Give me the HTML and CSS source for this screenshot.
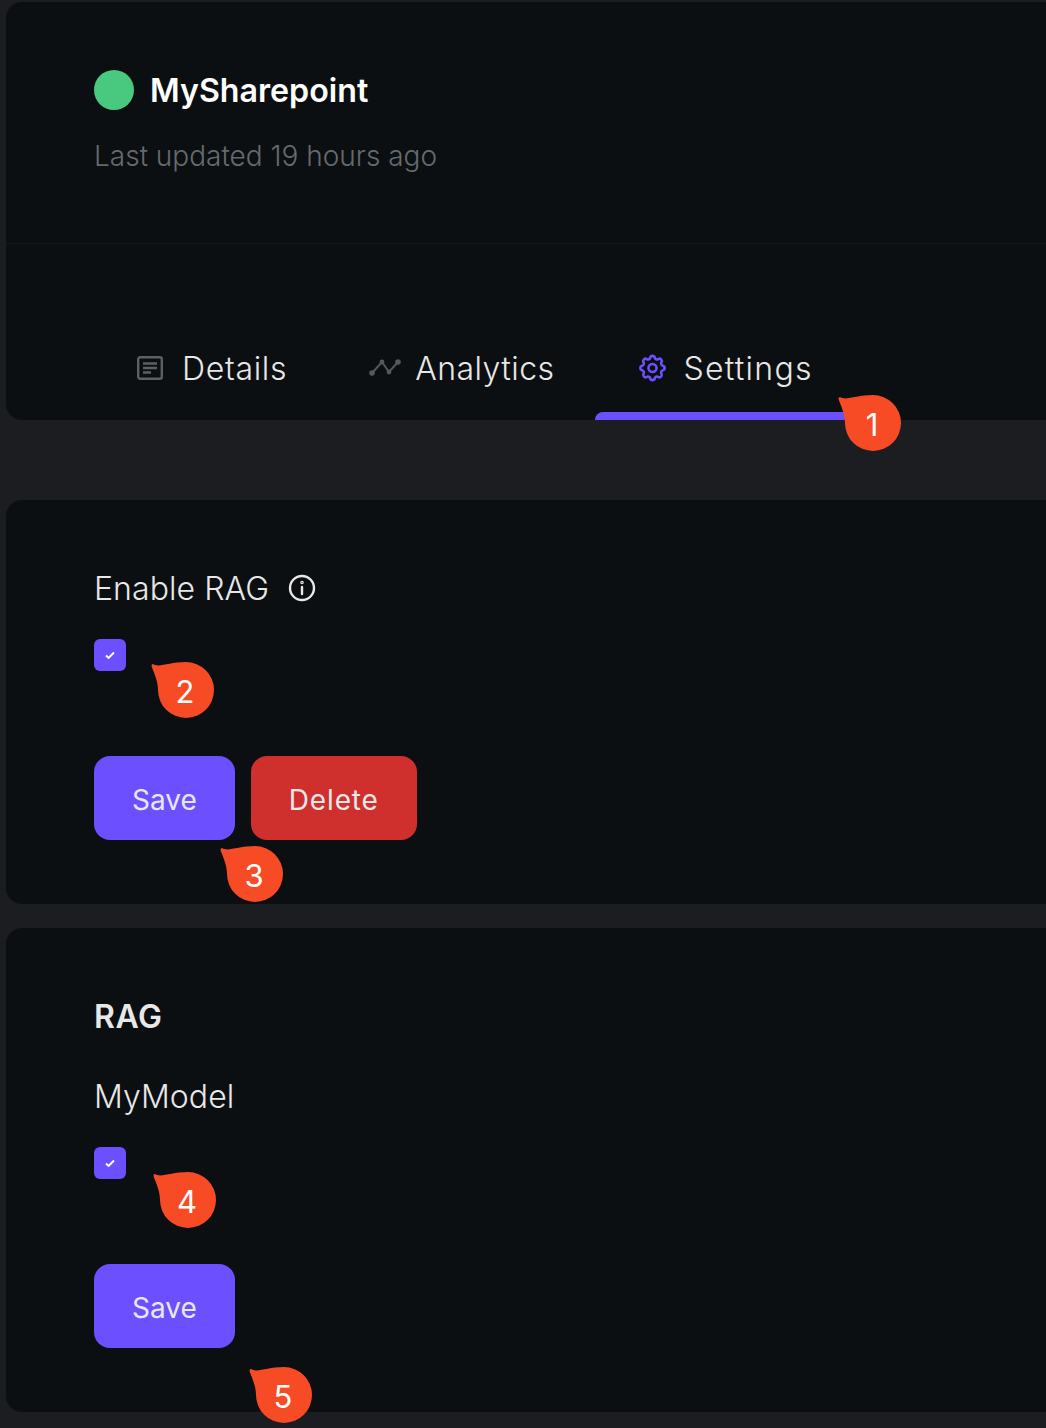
FILE: index.html
```html
<!DOCTYPE html>
<html lang="en">
<head>
    <meta charset="UTF-8">
    <meta name="viewport" content="width=device-width, initial-scale=1.0">
    <title>MySharepoint settings</title>
    <link rel="stylesheet" href="styles.css">
</head>
<body>
    <div class="page">
        <section class="card top-card">
            <header class="kb-header">
                <div class="kb-title">
                    <span class="status-dot"></span>
                    <h1>MySharepoint</h1>
                </div>
                <p class="updated">Last updated 19 hours ago</p>
            </header>
            <nav class="tabs">
                <a class="tab tab-details">
                    <svg class="tab-icon" viewBox="0 0 26 24" fill="none" stroke="#5c5f63" stroke-width="2.4">
                        <rect x="1.2" y="1.2" width="23.6" height="21.6" rx="2"/>
                        <path d="M6 7.5h14M6 12h14M6 16.5h8"/>
                    </svg>
                    Details
                </a>
                <a class="tab tab-analytics">
                    <svg class="tab-icon" viewBox="0 0 32 22" fill="none" stroke="#55585c" stroke-width="2">
                        <path d="M3 16l10-11 7 10 9-10"/>
                        <circle cx="3" cy="16" r="1.8" fill="#55585c"/>
                        <circle cx="13" cy="5" r="1.4" fill="#55585c"/>
                        <circle cx="20" cy="15" r="1.4" fill="#55585c"/>
                        <circle cx="29" cy="5" r="1.8" fill="#55585c"/>
                    </svg>
                    Analytics
                </a>
                <a class="tab tab-settings active">
                    <svg class="tab-icon" viewBox="2 2 20 20" fill="none" stroke="#6c50ff" stroke-width="1.9" stroke-linejoin="round">
                        <path d="M10.325 4.317c.426-1.756 2.924-1.756 3.35 0a1.724 1.724 0 0 0 2.573 1.066c1.543-.94 3.31.826 2.37 2.37a1.724 1.724 0 0 0 1.065 2.572c1.756.426 1.756 2.924 0 3.35a1.724 1.724 0 0 0-1.066 2.573c.94 1.543-.826 3.31-2.37 2.37a1.724 1.724 0 0 0-2.572 1.065c-.426 1.756-2.924 1.756-3.35 0a1.724 1.724 0 0 0-2.573-1.066c-1.543.94-3.31-.826-2.37-2.37a1.724 1.724 0 0 0-1.065-2.572c-1.756-.426-1.756-2.924 0-3.35a1.724 1.724 0 0 0 1.066-2.573c-.94-1.543.826-3.31 2.37-2.37c1 .608 2.296.07 2.572-1.065z"/>
                        <circle cx="12" cy="12" r="3"/>
                    </svg>
                    Settings
                </a>
            </nav>
        </section>

        <section class="card enable-card">
            <div class="field-label">
                Enable RAG
                <svg class="info-icon" viewBox="0 0 28 28" fill="none" stroke="#e8e8e8" stroke-width="2.4" stroke-linecap="round">
                    <circle cx="14" cy="14" r="12"/>
                    <path d="M14 13v7"/>
                    <circle cx="14" cy="8.5" r="0.6"/>
                </svg>
            </div>
            <span class="checkbox">
                <svg viewBox="0 0 12 12" fill="none" stroke="#fff" stroke-width="2"><path d="M2 6.5l2.6 2.4L10 3.5"/></svg>
            </span>
            <div class="actions">
                <button class="btn btn-save">Save</button>
                <button class="btn btn-delete">Delete</button>
            </div>
        </section>

        <section class="card rag-card">
            <h2>RAG</h2>
            <div class="field-label">MyModel</div>
            <span class="checkbox">
                <svg viewBox="0 0 12 12" fill="none" stroke="#fff" stroke-width="2"><path d="M2 6.5l2.6 2.4L10 3.5"/></svg>
            </span>
            <div class="actions">
                <button class="btn btn-save">Save</button>
            </div>
        </section>
    </div>

    <!-- callouts sit on top of the page -->
    <div class="pin pin-1"><svg viewBox="0 0 64 58"><path d="M2 3C8 7 18 1 35 1A28 28 0 1 1 7 29C7 20 3 12 .8 6Q0 3 2 3Z"/></svg><span>1</span></div>
    <div class="pin pin-2"><svg viewBox="0 0 64 58"><path d="M2 3C8 7 18 1 35 1A28 28 0 1 1 7 29C7 20 3 12 .8 6Q0 3 2 3Z"/></svg><span>2</span></div>
    <div class="pin pin-3"><svg viewBox="0 0 64 58"><path d="M2 3C8 7 18 1 35 1A28 28 0 1 1 7 29C7 20 3 12 .8 6Q0 3 2 3Z"/></svg><span>3</span></div>
    <div class="pin pin-4"><svg viewBox="0 0 64 58"><path d="M2 3C8 7 18 1 35 1A28 28 0 1 1 7 29C7 20 3 12 .8 6Q0 3 2 3Z"/></svg><span>4</span></div>
    <div class="pin pin-5"><svg viewBox="0 0 64 58"><path d="M2 3C8 7 18 1 35 1A28 28 0 1 1 7 29C7 20 3 12 .8 6Q0 3 2 3Z"/></svg><span>5</span></div>
</body>
</html>
```

FILE: styles.css
```css
html, body {
    margin: 0;
    height: 1428px;
    overflow: hidden;
}
body {
    position: relative;
    font-family: Inter, "Liberation Sans", sans-serif;
    background-color: #1c1d21;
    color: #e8e8e8;
}
.page {
    padding: 2px 0 0 6px;
    display: flex;
    flex-direction: column;
    width: 1046px;
    box-sizing: border-box;
}
.card {
    background-color: #0b0f11;
    border-radius: 16px 0 0 16px;
    box-sizing: border-box;
}

/* header card */
.top-card {
    height: 418px;
    margin-bottom: 80px;
}
.kb-header {
    height: 242px;
    box-sizing: border-box;
    padding: 68px 88px 0;
    border-bottom: 1px solid #16191c;
}
.kb-title {
    display: flex;
    align-items: center;
    gap: 16px;
}
.kb-title h1 {
    margin: 0;
    position: relative;
    top: 1px;
    font-size: 32.2px;
    line-height: 40px;
    font-weight: 600;
    color: #fff;
}
.status-dot {
    width: 40px;
    height: 40px;
    border-radius: 50%;
    background-color: #48c97f;
}
.updated {
    margin: 28px 0 0;
    font-size: 28px;
    line-height: 36px;
    font-weight: 300;
    color: #666a6e;
}

/* tabs */
.tabs {
    display: flex;
    height: 176px;
    padding-left: 87px;
}
.tab {
    position: relative;
    display: flex;
    align-items: center;
    height: 176px;
    box-sizing: border-box;
    padding: 72px 44px 0;
    font-size: 32px;
    font-weight: 300;
    color: #e8e8e8;
}
.tab-details {
    gap: 19px;
    letter-spacing: 0.7px;
}
.tab-details .tab-icon {
    width: 26px;
    height: 24px;
}
.tab-analytics {
    gap: 14px;
    margin-left: -6px;
    letter-spacing: 0.45px;
}
.tab-analytics .tab-icon {
    width: 32px;
    height: 22px;
}
.tab-settings {
    gap: 17px;
    margin-left: -3px;
    letter-spacing: 1.25px;
}
.tab-settings .tab-icon {
    width: 27px;
    height: 28px;
}
.tab-icon {
    flex-shrink: 0;
}
.tab.active::after {
    content: "";
    position: absolute;
    left: 0;
    right: 0;
    bottom: 0;
    height: 8px;
    border-radius: 8px 8px 0 0;
    background-color: #6c50ff;
}

/* settings cards */
.enable-card {
    height: 404px;
    margin-bottom: 24px;
    padding: 69px 88px 0;
}
.rag-card {
    height: 484px;
    padding: 69px 88px 0;
}
.rag-card h2 {
    margin: 0 0 40px;
    font-size: 32px;
    line-height: 40px;
    font-weight: 600;
    letter-spacing: 0.5px;
    color: #e8e8e8;
}
.field-label {
    display: flex;
    align-items: center;
    gap: 19px;
    font-size: 32px;
    line-height: 40px;
    font-weight: 300;
    letter-spacing: 0.06px;
}
.info-icon {
    width: 28px;
    height: 28px;
    position: relative;
    top: -1px;
}
.checkbox {
    display: flex;
    align-items: center;
    justify-content: center;
    width: 32px;
    height: 32px;
    margin-top: 30px;
    border-radius: 6px;
    background-color: #6c50ff;
}
.checkbox svg {
    width: 12px;
    height: 12px;
}
.actions {
    display: flex;
    gap: 16px;
    margin-top: 85px;
}
.btn {
    height: 84px;
    padding: 4px 38px 0;
    border: 0;
    border-radius: 16px;
    font-family: inherit;
    font-size: 28px;
    font-weight: 400;
    color: #e8e8e8;
}
.btn-save {
    background-color: #6c50ff;
}
.btn-delete {
    background-color: #cf302e;
    letter-spacing: 0.85px;
}

/* callouts */
.pin {
    position: absolute;
    width: 64px;
    height: 58px;
    font-size: 31px;
    color: #fff;
}
.pin svg {
    display: block;
    width: 64px;
    height: 58px;
    fill: #f74b25;
}
.pin span {
    position: absolute;
    left: 6px;
    top: 2px;
    width: 56px;
    height: 56px;
    display: flex;
    align-items: center;
    justify-content: center;
}
.pin-1 { left: 838px; top: 394px; }
.pin-2 { left: 151px; top: 661px; }
.pin-3 { left: 220px; top: 845px; }
.pin-4 { left: 153px; top: 1171px; }
.pin-5 { left: 249px; top: 1366px; }
```
